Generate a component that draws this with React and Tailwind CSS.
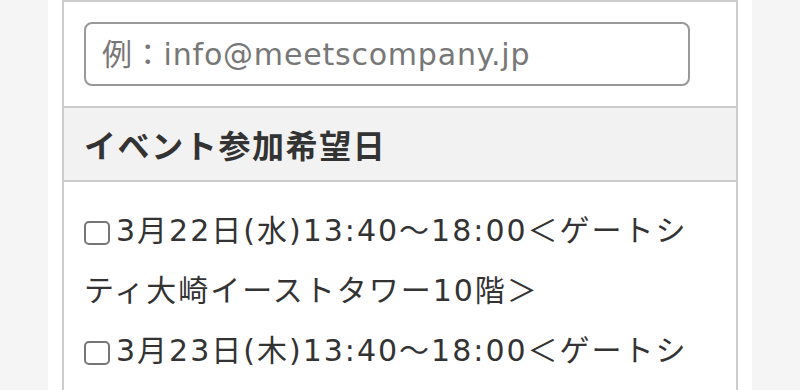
import React from "react";

function Box() {
  return (
    <span className="inline-block w-[26px] h-[24px] border-2 border-[#767676] rounded-[5px] bg-white mr-[6px] align-[-4px]" />
  );
}

export default function App() {
  return (
    <div
      className="min-h-screen bg-[#f5f5f5] text-[#333]"
      style={{ fontFamily: '"DejaVu Sans", "Noto Sans CJK JP", sans-serif' }}
    >
      <div className="mx-auto w-[704px] h-[390px] overflow-hidden bg-white px-[14px]">
        <div className="border-2 border-[#cccccc] border-b-0">
          <div className="p-[20px]">
            <div className="w-[606px] h-[64px] rounded-[8px] border-2 border-[#999999] flex items-center pl-[16px] text-[30px] tracking-[0.8px] text-[#777777]">
              例：info@meetscompany.jp
            </div>
          </div>
          <div
            className="border-t-2 border-[#cccccc] bg-[#f2f2f2] h-[74px] flex items-center px-[20px] text-[32px] font-bold tracking-[0.05em]"
            style={{ fontFamily: '"Noto Sans CJK JP", sans-serif' }}
          >
            イベント参加希望日
          </div>
          <div className="border-t-2 border-[#cccccc] px-[20px] pt-[19px] text-[30px] leading-[60px] tracking-[2px]">
            <div>
              <Box />3月22日(水)13:40～18:00＜ゲートシティ大崎イーストタワー10階＞
            </div>
            <div>
              <Box />3月23日(木)13:40～18:00＜ゲートシティ大崎イーストタワー10階＞
            </div>
          </div>
        </div>
      </div>
    </div>
  );
}
